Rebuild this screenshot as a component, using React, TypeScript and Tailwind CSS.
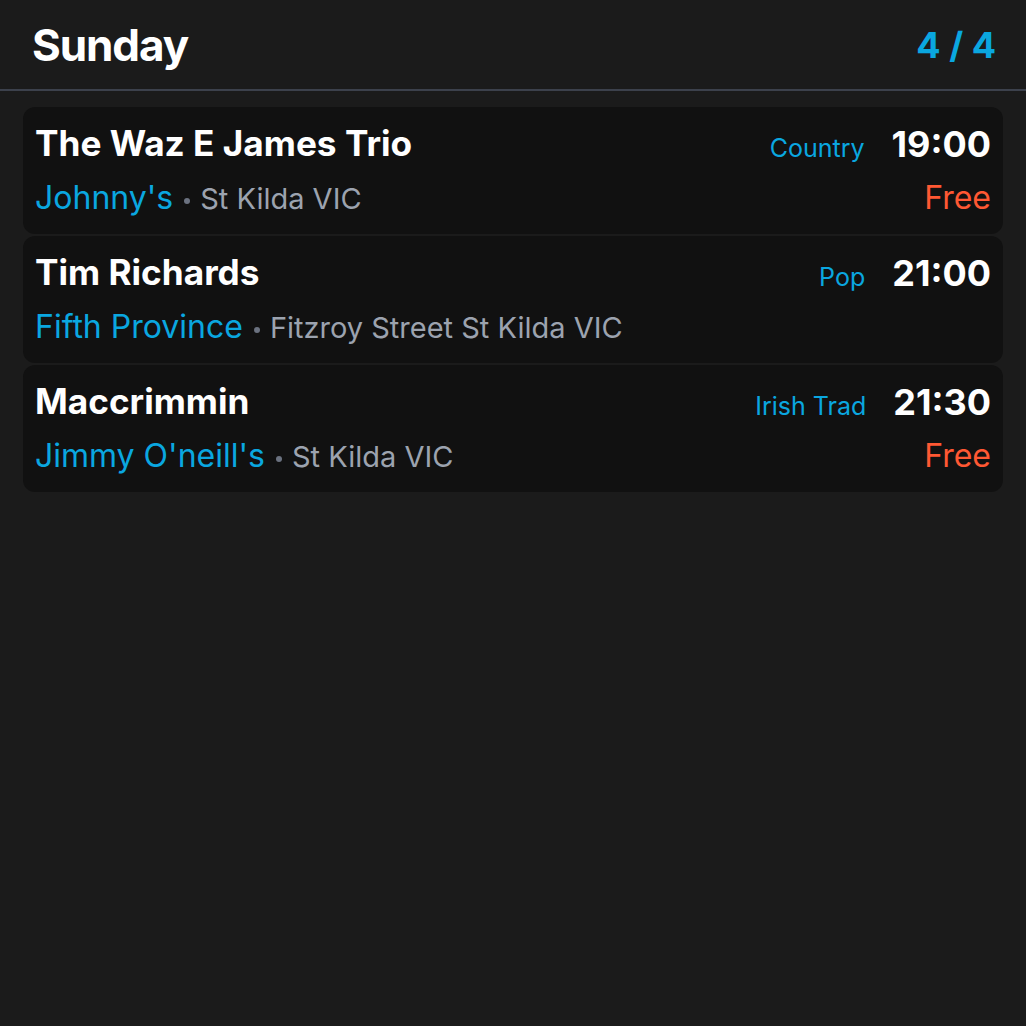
import React from 'react';

interface Gig {
  artist: string;
  genre: string;
  time: string;
  venue: string;
  location: string;
  free: boolean;
}

const gigs: Gig[] = [
  { artist: 'The Waz E James Trio', genre: 'Country', time: '19:00', venue: "Johnny's", location: 'St Kilda VIC', free: true },
  { artist: 'Tim Richards', genre: 'Pop', time: '21:00', venue: 'Fifth Province', location: 'Fitzroy Street St Kilda VIC', free: false },
  { artist: 'Maccrimmin', genre: 'Irish Trad', time: '21:30', venue: "Jimmy O'neill's", location: 'St Kilda VIC', free: true },
];

const GigCard: React.FC<{ gig: Gig }> = ({ gig }) => {
  return (
    <div className="bg-[#111111] rounded-[12px] px-3 pt-3 h-[127px]">
      <div className="flex items-center justify-between h-[49px]">
        <h3 className="text-[35.2px] font-bold text-white truncate">{gig.artist}</h3>
        <div className="flex items-baseline gap-[27px]">
          <span className="text-[25px] text-[#0aa7e0]">{gig.genre}</span>
          <span className="text-[36px] font-bold text-white">{gig.time}</span>
        </div>
      </div>
      <div className="flex items-center justify-between h-[60px]">
        <p className="text-[29px] truncate">
          <span className="text-[32px] text-[#0aa7e0]">{gig.venue}</span>
          <span className="inline-block w-[6px] h-[6px] rounded-full bg-[#6b7280] ml-[11px] mr-[10px] align-middle" />
          <span className="text-[#9ca3af]">{gig.location}</span>
        </p>
        {gig.free && <span className="text-[32px] text-[#ff5833]">Free</span>}
      </div>
    </div>
  );
};

export default function App() {
  return (
    <div className="min-h-screen w-full bg-[#1b1b1b] font-['Inter',sans-serif]">
      <div className="flex items-center justify-between h-[91px] pl-8 pr-[30px] border-b-2 border-[#3c414c]">
        <h1 className="text-[44px] font-bold text-white tracking-tight">Sunday</h1>
        <span className="text-[36px] font-bold text-[#0aa7e0]">4 / 4</span>
      </div>
      <div className="flex flex-col gap-[2px] px-[23px] pt-[16px]">
        {gigs.map((gig) => (
          <GigCard key={gig.artist} gig={gig} />
        ))}
      </div>
    </div>
  );
}
